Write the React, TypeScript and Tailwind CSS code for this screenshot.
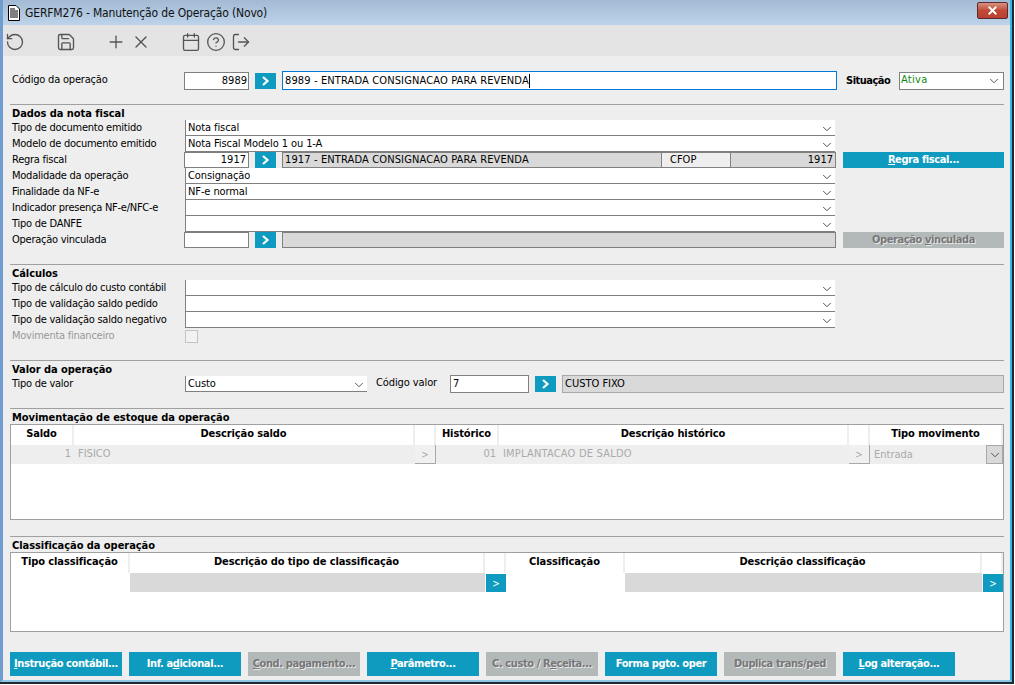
import { RotateCcw, Save, Plus, X, Calendar, CircleHelp, LogOut, ChevronDown } from 'lucide-react';
import type { ReactNode } from 'react';

function GoButton() {
  return (
    <div className="w-[21px] h-[16px] bg-[#0f9bc0] flex items-center justify-center shrink-0">
      <svg width="9" height="10" viewBox="0 0 9 10">
        <path d="M2 1 L6.5 5 L2 9" fill="none" stroke="white" strokeWidth="2.2" />
      </svg>
    </div>
  );
}

function Select({ text, className = 'flex-1' }: { text?: string; className?: string }) {
  return (
    <div className={`h-[16px] bg-white border-l border-b border-[#808080] flex items-center justify-between pl-[2px] pr-[1px] ${className}`}>
      <span className="leading-none tracking-[-0.1px]">{text}</span>
      <ChevronDown size={14} strokeWidth={1.4} className="text-[#333] mt-[2px]" />
    </div>
  );
}

function Row({ label, muted, children }: { label: string; muted?: boolean; children: ReactNode }) {
  return (
    <div className="flex h-[16px] items-stretch">
      <div className={`w-[175px] pl-[2px] pt-[1px] shrink-0 leading-[14px] tracking-[-0.25px] whitespace-nowrap ${muted ? 'text-[#999]' : ''}`}>{label}</div>
      {children}
    </div>
  );
}

function SelectRow({ label, text }: { label: string; text?: string }) {
  return (
    <Row label={label}>
      <div className="w-[650px] flex"><Select text={text} /></div>
    </Row>
  );
}

function Section({ title }: { title: string }) {
  return (
    <div className="border-t border-[#a0a0a0] h-[16px] pl-[2px] pt-[2px] font-bold leading-[14px] tracking-[-0.05px]">
      {title}
    </div>
  );
}

function Btn({ off, small, children }: { off?: boolean; small?: boolean; children: ReactNode }) {
  return (
    <div className={`flex items-center justify-center font-bold whitespace-nowrap tracking-[-0.4px] ${small ? 'w-[161px] h-[16px]' : 'w-[112px] h-[24px]'} ${off ? 'bg-[#b3b8b8] text-[#777] [text-shadow:1px_1px_0_#e8e8e8]' : 'bg-[#0f9bc0] text-white'}`}>
      <span>{children}</span>
    </div>
  );
}

function Th({ className, children }: { className: string; children?: ReactNode }) {
  return (
    <div className={`h-[20px] pb-[1px] border-r-2 border-[#eeeeee] font-bold tracking-[-0.1px] flex items-center justify-center ${className}`}>
      {children}
    </div>
  );
}

function SmallGo({ active }: { active?: boolean }) {
  return (
    <div className={`h-[19px] flex items-center justify-center text-[10px] ${active ? 'bg-[#0f9bc0] text-white border-t border-white' : 'border-r border-b border-[#a8a8a8] text-[#aaa] bg-[#f0f0f0]'}`}>
      &gt;
    </div>
  );
}

export default function App() {
  return (
    <div className="w-[1015px] h-[685px] bg-white overflow-hidden text-[11px] text-black font-['DejaVu_Sans_Condensed','Liberation_Sans',Arial,sans-serif]">
      <div className="w-[1014px] h-[684px] border-r-2 border-b-2 border-[#202830]">
        <div className="h-full flex flex-col border-l-[3px] border-r-[2px] border-b-[2px] border-l-[#6f9dd0] border-r-[#35b4e6] border-b-[#8fc6e6]">
          {/* Title bar */}
          <div className="h-[25px] shrink-0 bg-gradient-to-b from-[#a2bad3] to-[#bcd3ea] flex items-center justify-between pl-[4px] pr-[2px]">
            <div className="flex items-center gap-[4px] text-[12px] text-[#111]">
              <svg width="14" height="16" viewBox="0 0 14 16">
                <path d="M1.5 .5 H9 L12.5 4 V15.5 H1.5 Z" fill="white" stroke="black" />
                <path d="M3 4h5M3 6h8M3 8h8M3 10h8M3 12h8" stroke="black" strokeWidth="1.2" />
              </svg>
              <span className="tracking-[-0.15px] mt-[1px]">GERFM276 - Manutenção de Operação (Novo)</span>
            </div>
            <div className="w-[31px] h-[17px] mb-[4px] rounded-[2px] border border-[#5a2a30] bg-gradient-to-b from-[#d9907f] via-[#c04a38] to-[#b8402f] flex items-center justify-center">
              <X size={13} strokeWidth={3.5} className="text-white" />
            </div>
          </div>

          {/* Toolbar */}
          <div className="h-[31px] shrink-0 bg-[#e4e4e4] flex items-center pt-[2px] text-[#555]">
            <RotateCcw size={20} strokeWidth={1.6} className="ml-[2px]" />
            <Save size={20} strokeWidth={1.6} className="ml-[31px]" />
            <Plus size={20} strokeWidth={1.6} className="ml-[30px]" />
            <X size={20} strokeWidth={1.6} className="ml-[5px]" />
            <Calendar size={20} strokeWidth={1.6} className="ml-[30px]" />
            <CircleHelp size={20} strokeWidth={1.6} className="ml-[5px]" />
            <LogOut size={20} strokeWidth={1.6} className="ml-[5px]" />
          </div>

          {/* Form */}
          <div className="flex-1 bg-[#eeeeee] pl-[7px] pr-[6px]">
            {/* Código */}
            <div className="flex items-center h-[19px] mt-[15px]">
              <div className="w-[174px] pl-[2px] shrink-0 tracking-[-0.2px]">Código da operação</div>
              <div className="w-[65px] h-[18px] bg-white border border-[#808080] text-right pr-[1px] leading-[16px]">8989</div>
              <div className="ml-[6px]"><GoButton /></div>
              <div className="ml-[6px] w-[555px] h-[19px] bg-white border border-[#0078d7] pl-[2px] leading-[17px] flex items-center tracking-[0.13px]">
                8989 - ENTRADA CONSIGNACAO PARA REVENDA
                <span className="w-px h-[14px] bg-black" />
              </div>
              <div className="ml-[9px] w-[53px] font-bold mt-[2px] tracking-[-0.5px]">Situação</div>
              <div className="w-[105px] h-[18px] bg-white border border-[#808080] flex items-center justify-between pl-[1px] pr-[2px]">
                <span className="text-[#108a10] leading-none mb-[3px] tracking-[0.3px]">Ativa</span>
                <ChevronDown size={14} strokeWidth={1.4} className="text-[#333]" />
              </div>
            </div>

            {/* Dados da nota fiscal */}
            <div className="mt-[14px]"><Section title="Dados da nota fiscal" /></div>
            <SelectRow label="Tipo de documento emitido" text="Nota fiscal" />
            <SelectRow label="Modelo de documento emitido" text="Nota Fiscal Modelo 1 ou 1-A" />
            <Row label="Regra fiscal">
              <div className="w-[65px] ml-[-1px] bg-white border border-[#808080] text-right pr-[2px] leading-[14px]">1917</div>
              <div className="ml-[6px]"><GoButton /></div>
              <div className="ml-[6px] w-[380px] bg-[#d9d9d9] border border-[#808080] pl-[2px] leading-[14px] tracking-[0.13px]">1917 - ENTRADA CONSIGNACAO PARA REVENDA</div>
              <div className="w-[68px] bg-[#eeeeee] border-y border-[#808080] pl-[8px] leading-[13px]">CFOP</div>
              <div className="w-[106px] bg-[#d9d9d9] border border-[#808080] text-right pr-[2px] leading-[14px]">1917</div>
              <div className="ml-[7px]"><Btn small><u>R</u>egra fiscal...</Btn></div>
            </Row>
            <SelectRow label="Modalidade da operação" text="Consignação" />
            <SelectRow label="Finalidade da NF-e" text="NF-e normal" />
            <SelectRow label="Indicador presença NF-e/NFC-e" />
            <SelectRow label="Tipo de DANFE" />
            <Row label="Operação vinculada">
              <div className="w-[65px] ml-[-1px] bg-white border border-[#808080]" />
              <div className="ml-[6px]"><GoButton /></div>
              <div className="ml-[6px] w-[554px] bg-[#d9d9d9] border border-[#808080]" />
              <div className="ml-[7px]"><Btn small off>Operação <u>v</u>inculada</Btn></div>
            </Row>

            {/* Cálculos */}
            <div className="mt-[16px]"><Section title="Cálculos" /></div>
            <SelectRow label="Tipo de cálculo do custo contábil" />
            <SelectRow label="Tipo de validação saldo pedido" />
            <SelectRow label="Tipo de validação saldo negativo" />
            <Row label="Movimenta financeiro" muted>
              <div className="w-[13px] h-[13px] bg-[#f2f2f2] border border-[#c4c4c4] mt-[2px]" />
            </Row>

            {/* Valor */}
            <div className="mt-[16px]"><Section title="Valor da operação" /></div>
            <Row label="Tipo de valor">
              <Select text="Custo" className="w-[182px]" />
              <div className="w-[83px] pl-[9px] shrink-0 leading-[14px] tracking-[-0.1px]">Código valor</div>
              <div className="w-[79px] h-[18px] -mt-[1px] bg-white border border-[#808080] pl-[2px] leading-[16px]">7</div>
              <div className="ml-[6px]"><GoButton /></div>
              <div className="ml-[6px] w-[442px] h-[18px] -mt-[1px] bg-[#d9d9d9] border border-[#a8a8a8] pl-[2px] leading-[16px]">CUSTO FIXO</div>
            </Row>

            {/* Movimentação */}
            <div className="mt-[16px]"><Section title="Movimentação de estoque da operação" /></div>
            <div className="h-[96px] bg-white border border-[#a0a0a0] overflow-hidden">
              <div className="flex">
                <Th className="w-[63px]">Saldo</Th>
                <Th className="w-[341px]">Descrição saldo</Th>
                <Th className="w-[21px]" />
                <Th className="w-[63px]">Histórico</Th>
                <Th className="w-[350px]">Descrição histórico</Th>
                <Th className="w-[21px]" />
                <Th className="flex-1 border-r-0">Tipo movimento</Th>
              </div>
              <div className="flex h-[19px] bg-[#eeeeee] text-[#aaa] leading-[17px]">
                <div className="w-[61px] text-right pr-[1px]">1</div>
                <div className="w-[343px] pl-[6px]">FISICO</div>
                <div className="w-[21px] bg-white"><SmallGo /></div>
                <div className="w-[61px] text-right pr-[1px]">01</div>
                <div className="w-[352px] pl-[6px] tracking-[0.2px]">IMPLANTACAO DE SALDO</div>
                <div className="w-[21px] bg-white"><SmallGo /></div>
                <div className="flex-1 flex justify-between pl-[4px]">
                  <span className="mt-[1px]">Entrada</span>
                  <div className="w-[17px] h-[19px] bg-[#d9d9d9] border border-[#a8a8a8] flex items-center justify-center">
                    <ChevronDown size={14} strokeWidth={1.4} className="text-[#333]" />
                  </div>
                </div>
              </div>
            </div>

            {/* Classificação */}
            <div className="mt-[16px]"><Section title="Classificação da operação" /></div>
            <div className="h-[80px] bg-white border border-[#a0a0a0] overflow-hidden">
              <div className="flex">
                <Th className="w-[119px]">Tipo classificação</Th>
                <Th className="w-[355px]">Descrição do tipo de classificação</Th>
                <Th className="w-[21px]" />
                <Th className="w-[119px]">Classificação</Th>
                <Th className="w-[357px]">Descrição classificação</Th>
                <Th className="flex-1 border-r-0" />
              </div>
              <div className="flex h-[19px]">
                <div className="w-[119px]" />
                <div className="w-[355px] bg-[#d9d9d9]" />
                <div className="w-[20px] ml-[1px]"><SmallGo active /></div>
                <div className="w-[119px]" />
                <div className="w-[357px] bg-[#d9d9d9]" />
                <div className="w-[20px] ml-[1px]"><SmallGo active /></div>
              </div>
            </div>

            {/* Bottom buttons */}
            <div className="flex gap-[7px] mt-[20px]">
              <Btn><u>I</u>nstrução contábil...</Btn>
              <Btn>Inf. a<u>d</u>icional...</Btn>
              <Btn off><u>C</u>ond. pagamento...</Btn>
              <Btn><u>P</u>arâmetro...</Btn>
              <Btn off>C. custo / R<u>e</u>ceita...</Btn>
              <Btn>Forma pgto. oper</Btn>
              <Btn off>Duplica trans/ped</Btn>
              <Btn><u>L</u>og alteração...</Btn>
            </div>
          </div>
        </div>
      </div>
    </div>
  );
}
